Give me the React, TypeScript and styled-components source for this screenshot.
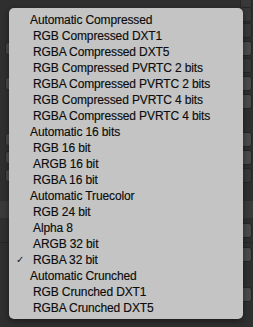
import React from "react";
import styled, { createGlobalStyle } from "styled-components";

const Global = createGlobalStyle`
  html, body { margin: 0; padding: 0; background: #2f2f2f; }
  body { font-family: "Liberation Sans", Arial, sans-serif; }
`;

const Stage = styled.div`
  position: relative;
  width: 253px;
  height: 327px;
  overflow: hidden;
  background: #2f2f2f;
`;

const Inspector = styled.div`
  display: flex;
  flex-direction: column;
  height: 100%;
`;

const InspRow = styled.div<{ $h: number; $band?: boolean; $line?: boolean }>`
  height: ${(p) => p.$h}px;
  flex: none;
  display: flex;
  align-items: center;
  justify-content: space-between;
  padding: 0 1px 0 5px;
  box-sizing: border-box;
  background: ${(p) => (p.$band ? "#3a3a3a" : "transparent")};
  border-bottom: ${(p) => (p.$line ? "1px solid #262626" : "none")};
`;

const Knob = styled.div<{ $kind: "btn" | "field" | "none" }>`
  width: 9px;
  height: 13px;
  border-radius: 3px;
  box-sizing: border-box;
  background: ${(p) =>
    p.$kind === "btn" ? "#4a4a4a" : p.$kind === "field" ? "#383838" : "transparent"};
  border: ${(p) => (p.$kind === "none" ? "none" : "1px solid #262626")};
`;

const RightKnob = styled(Knob)`
  width: 12px;
  height: 15px;
`;

const Menu = styled.div`
  position: absolute;
  left: 9px;
  top: 8px;
  width: 234px;
  height: 311px;
  box-sizing: border-box;
  padding: 4px 0;
  background: #c4c4c4;
  border-radius: 5px;
  box-shadow: 0 2px 6px rgba(0, 0, 0, 0.45);
  display: flex;
  flex-direction: column;
`;

const Item = styled.div<{ $header?: boolean }>`
  position: relative;
  height: 16px;
  line-height: 16px;
  padding-left: ${(p) => (p.$header ? 21 : 24)}px;
  font-size: 12px;
  color: #0c0c0c;
  white-space: nowrap;
  letter-spacing: -0.12px;
  -webkit-text-stroke: 0.15px #0c0c0c;
`;

const Check = styled.span`
  position: absolute;
  left: 7px;
  top: 0;
  font-size: 10px;
  color: #1a1a1a;
  -webkit-text-stroke: 0;
`;

type Entry = { label: string; header?: boolean; checked?: boolean };

const entries: Entry[] = [
  { label: "Automatic Compressed", header: true },
  { label: "RGB Compressed DXT1" },
  { label: "RGBA Compressed DXT5" },
  { label: "RGB Compressed PVRTC 2 bits" },
  { label: "RGBA Compressed PVRTC 2 bits" },
  { label: "RGB Compressed PVRTC 4 bits" },
  { label: "RGBA Compressed PVRTC 4 bits" },
  { label: "Automatic 16 bits", header: true },
  { label: "RGB 16 bit" },
  { label: "ARGB 16 bit" },
  { label: "RGBA 16 bit" },
  { label: "Automatic Truecolor", header: true },
  { label: "RGB 24 bit" },
  { label: "Alpha 8" },
  { label: "ARGB 32 bit" },
  { label: "RGBA 32 bit", checked: true },
  { label: "Automatic Crunched", header: true },
  { label: "RGB Crunched DXT1" },
  { label: "RGBA Crunched DXT5" },
];

type Row = { h: number; l: "btn" | "field" | "none"; r: "btn" | "field" | "none"; band?: boolean; line?: boolean };

const rows: Row[] = [
  { h: 8, l: "none", r: "field" },
  { h: 12, l: "none", r: "field" },
  { h: 20, l: "none", r: "field" },
  { h: 16, l: "btn", r: "btn" },
  { h: 18, l: "none", r: "field" },
  { h: 18, l: "btn", r: "btn" },
  { h: 18, l: "none", r: "btn" },
  { h: 20, l: "none", r: "none" },
  { h: 18, l: "btn", r: "btn" },
  { h: 18, l: "btn", r: "btn" },
  { h: 18, l: "btn", r: "field" },
  { h: 17, l: "none", r: "none" },
  { h: 17, l: "none", r: "none", band: true },
  { h: 25, l: "none", r: "btn", line: true },
  { h: 22, l: "none", r: "btn" },
  { h: 20, l: "none", r: "none" },
  { h: 18, l: "none", r: "btn" },
];

export default function App() {
  return (
    <>
      <Global />
      <Stage>
        <Inspector>
          {rows.map((r, i) => (
            <InspRow key={i} $h={r.h} $band={r.band} $line={r.line}>
              <Knob $kind={r.l} />
              <RightKnob $kind={r.r} />
            </InspRow>
          ))}
        </Inspector>
        <Menu>
          {entries.map((e) => (
            <Item key={e.label} $header={e.header}>
              {e.checked && <Check>✓</Check>}
              {e.label}
            </Item>
          ))}
        </Menu>
      </Stage>
    </>
  );
}
